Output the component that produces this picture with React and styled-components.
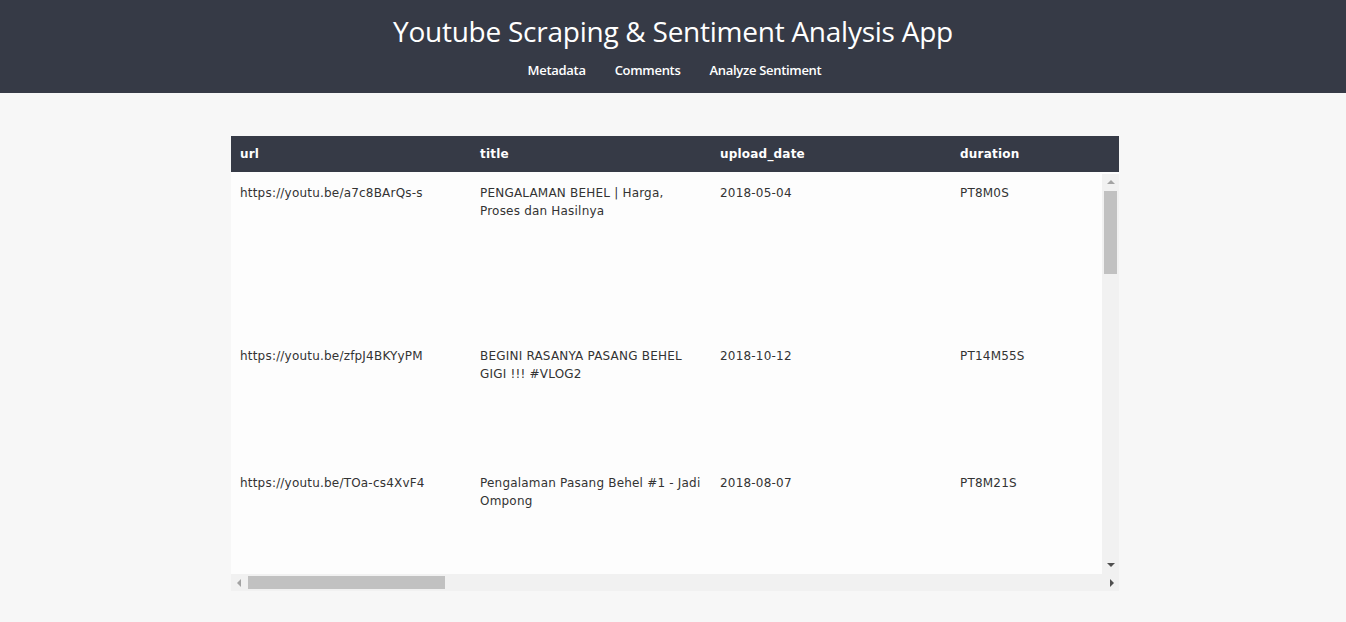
import React from "react";
import styled, { createGlobalStyle } from "styled-components";

const Global = createGlobalStyle`
  html, body { margin: 0; padding: 0; }
  body { background: #f7f7f7; font-family: "DejaVu Sans", Verdana, sans-serif; }
`;

const Header = styled.header`
  background: #363a46;
  height: 93px;
  display: flex;
  flex-direction: column;
  align-items: center;
  box-sizing: border-box;
  padding-top: 11px;
`;

const Title = styled.h1`
  margin: 0;
  font-family: "Open Sans", "Noto Sans", sans-serif;
  font-weight: 400;
  font-size: 28px;
  line-height: 40px;
  color: #ffffff;
  letter-spacing: -0.25px;
`;

const Nav = styled.nav`
  display: flex;
  gap: 29px;
  margin-top: 10px;
  padding-left: 3px;
`;

const NavLink = styled.a`
  font-family: "Open Sans", "Noto Sans", sans-serif;
  font-weight: 600;
  font-size: 13px;
  color: #ffffff;
  text-decoration: none;
  letter-spacing: -0.3px;
`;

const Main = styled.main`
  padding: 43px 0 0 4px;
`;

const TableBox = styled.div`
  width: 888px;
  margin: 0 auto;
  background: #fdfdfd;
`;

const HeadRow = styled.div`
  display: flex;
  height: 36px;
  background: #363a46;
`;

const HeadCell = styled.div`
  flex: 0 0 240px;
  box-sizing: border-box;
  padding: 0 9px;
  display: flex;
  align-items: center;
  color: #ffffff;
  font-weight: 700;
  font-size: 12px;
  letter-spacing: 0.2px;
`;

const Frame = styled.div`
  display: grid;
  grid-template-columns: 1fr 17px;
  grid-template-rows: 402px 17px;
`;

const BodyView = styled.div`
  overflow: hidden;
`;

const Row = styled.div`
  display: flex;
  height: ${(p) => p.$h}px;
`;

const Cell = styled.div`
  flex: 0 0 240px;
  box-sizing: border-box;
  padding: 12px 9px 10px 9px;
  font-size: 12px;
  line-height: 18px;
  letter-spacing: 0.2px;
  color: #333333;
`;

const VBar = styled.div`
  display: flex;
  flex-direction: column;
  padding-top: 2px;
  background: #fdfdfd;
`;

const VTrack = styled.div`
  flex: 1;
  background: #f1f1f1;
  padding: 0 2px;
`;

const VThumb = styled.div`
  height: 83px;
  background: #c1c1c1;
`;

const HBar = styled.div`
  grid-column: 1 / span 2;
  display: flex;
  background: #f1f1f1;
`;

const HTrack = styled.div`
  flex: 1;
  padding: 2px 0 2px;
`;

const HThumb = styled.div`
  width: 197px;
  height: 100%;
  background: #c1c1c1;
`;

const ArrowBtn = styled.div`
  flex: 0 0 17px;
  width: 17px;
  height: 17px;
  background: #f1f1f1;
  display: flex;
  align-items: center;
  justify-content: center;
  color: ${(p) => (p.$active ? "#505050" : "#a3a3a3")};
`;

const Arrow = ({ dir, active }) => {
  const pts = {
    up: "4,1 8,5 0,5",
    down: "0,1 8,1 4,5",
    left: "1,4 5,0 5,8",
    right: "3,0 7,4 3,8",
  }[dir];
  return (
    <ArrowBtn $active={active}>
      <svg width="8" height="8" viewBox="0 0 8 8">
        <polygon points={pts} fill="currentColor" />
      </svg>
    </ArrowBtn>
  );
};

const columns = ["url", "title", "upload_date", "duration"];

const rows = [
  { h: 163, c: ["https://youtu.be/a7c8BArQs-s", "PENGALAMAN BEHEL | Harga, Proses dan Hasilnya", "2018-05-04", "PT8M0S"] },
  { h: 127, c: ["https://youtu.be/zfpJ4BKYyPM", "BEGINI RASANYA PASANG BEHEL GIGI !!! #VLOG2", "2018-10-12", "PT14M55S"] },
  { h: 145, c: ["https://youtu.be/TOa-cs4XvF4", "Pengalaman Pasang Behel #1 - Jadi Ompong", "2018-08-07", "PT8M21S"] },
];

export default function App() {
  return (
    <>
      <Global />
      <Header>
        <Title>Youtube Scraping &amp; Sentiment Analysis App</Title>
        <Nav>
          <NavLink href="#">Metadata</NavLink>
          <NavLink href="#">Comments</NavLink>
          <NavLink href="#">Analyze Sentiment</NavLink>
        </Nav>
      </Header>
      <Main>
        <TableBox>
          <HeadRow>
            {columns.map((c) => (
              <HeadCell key={c}>{c}</HeadCell>
            ))}
          </HeadRow>
          <Frame>
            <BodyView>
              {rows.map((r, i) => (
                <Row key={i} $h={r.h}>
                  {columns.map((c, j) => (
                    <Cell key={c}>{r.c[j]}</Cell>
                  ))}
                </Row>
              ))}
            </BodyView>
            <VBar>
              <Arrow dir="up" />
              <VTrack>
                <VThumb />
              </VTrack>
              <Arrow dir="down" active />
            </VBar>
            <HBar>
              <Arrow dir="left" />
              <HTrack>
                <HThumb />
              </HTrack>
              <Arrow dir="right" active />
            </HBar>
          </Frame>
        </TableBox>
      </Main>
    </>
  );
}
